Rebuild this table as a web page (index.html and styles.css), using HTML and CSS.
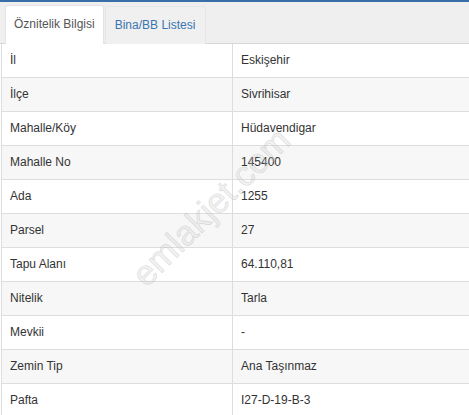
FILE: index.html
```html
<!DOCTYPE html>
<html lang="tr">
<head>
<meta charset="utf-8">
<link rel="stylesheet" href="styles.css">
</head>
<body>
<div class="panel">
  <div class="tabs">
    <div class="tab active">Öznitelik Bilgisi</div>
    <div class="tab link">Bina/BB Listesi</div>
  </div>
  <div class="content">
    <table class="attr">
      <tr><td>İl</td><td>Eskişehir</td></tr>
      <tr><td>İlçe</td><td>Sivrihisar</td></tr>
      <tr><td>Mahalle/Köy</td><td>Hüdavendigar</td></tr>
      <tr><td>Mahalle No</td><td>145400</td></tr>
      <tr><td>Ada</td><td>1255</td></tr>
      <tr><td>Parsel</td><td>27</td></tr>
      <tr><td>Tapu Alanı</td><td>64.110,81</td></tr>
      <tr><td>Nitelik</td><td>Tarla</td></tr>
      <tr><td>Mevkii</td><td>-</td></tr>
      <tr><td>Zemin Tip</td><td>Ana Taşınmaz</td></tr>
      <tr><td>Pafta</td><td>I27-D-19-B-3</td></tr>
    </table>
    <div class="watermark">emlakjet.com</div>
  </div>
</div>
</body>
</html>
```

FILE: styles.css
```css
html, body {
  margin: 0;
  padding: 0;
  background: #ffffff;
}
body {
  font-family: "Liberation Sans", Arial, sans-serif;
  font-size: 12px;
  color: #333333;
  overflow: hidden;
}
.panel {
  border-top: 2px solid #3b6ea8;
  width: 469px;
}
.tabs {
  display: flex;
  background: #efefef;
  padding: 4px 0 0 5px;
  border-bottom: 1px solid #d6d6d6;
  height: 37px;
  align-items: flex-end;
}
.tab {
  padding: 10px 8px;
  line-height: 17px;
  margin-bottom: -1px;
  border: 1px solid transparent;
  border-bottom: none;
}
.tab.active {
  background: #ffffff;
  color: #555555;
  border-color: #e4e4e4;
  border-radius: 3px 3px 0 0;
  padding-bottom: 11px;
}
.tab.link {
  color: #3a76b0;
  margin-left: 1px;
  background: #f0f0f0;
  border-color: #e6e6e6;
  border-radius: 3px 3px 0 0;
  padding-left: 9px;
  padding-right: 10px;
}
.content {
  position: relative;
  padding-left: 1px;
}
.attr {
  border-collapse: collapse;
  width: 470px;
  border-left: 1px solid #dddddd;
}
.attr td {
  padding: 8px 8px;
  line-height: 17px;
  border-bottom: 1px solid #dddddd;
  height: 16px;
}
.attr td:first-child {
  width: 214px;
  border-right: 1px solid #dddddd;
}
.attr tr:nth-child(even) td {
  background: #f7f7f7;
}
.watermark {
  position: absolute;
  left: 211px;
  top: 163px;
  font-size: 35px;
  color: rgba(210, 210, 210, 0.3);
  -webkit-text-stroke: 0.7px rgba(170, 170, 170, 0.35);
  transform: translate(-50%, -50%) rotate(-45deg);
  white-space: nowrap;
  pointer-events: none;
}
```
